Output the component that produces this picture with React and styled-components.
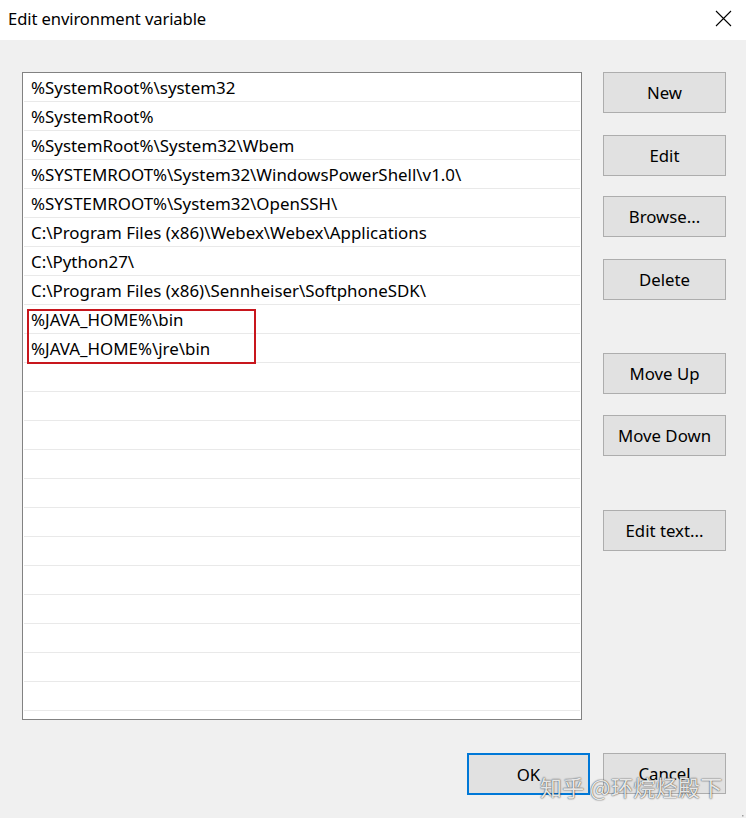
import React from 'react'
import styled, { createGlobalStyle } from 'styled-components'

const GlobalStyle = createGlobalStyle`
  html, body {
    margin: 0;
    padding: 0;
    background: #f0f0f0;
  }
  body {
    font-family: "Noto Sans", "Open Sans", sans-serif;
    color: #000;
  }
`

const Window = styled.div`
  width: 746px;
  height: 818px;
  display: flex;
  flex-direction: column;
  background: #f0f0f0;
  position: relative;
  overflow: hidden;
`

const TitleBar = styled.div`
  height: 40px;
  background: #fff;
  display: flex;
  align-items: center;
  justify-content: space-between;
  padding: 0 14px 0 8px;
  flex-shrink: 0;
`

const Title = styled.div`
  font-size: 16.6px;
  color: #000;
  letter-spacing: -0.1px;
  margin-top: -4px;
`

const CloseButton = styled.div`
  width: 18px;
  height: 18px;
  display: flex;
  align-items: center;
  justify-content: center;
  margin-top: -4px;
`

const Body = styled.div`
  flex: 1;
  display: flex;
  flex-direction: column;
  padding: 32px 20px 0 22px;
`

const Main = styled.div`
  display: flex;
  gap: 21px;
`

const ListBox = styled.div`
  position: relative;
  width: 558px;
  height: 646px;
  border: 1px solid #828282;
  background: #fff;
  overflow: hidden;
`

const Row = styled.div`
  height: 28px;
  margin: 0 1px;
  border-bottom: 1px solid #e9e9e9;
  display: flex;
  align-items: center;
  padding-left: 7px;
  font-size: 16.9px;
  white-space: nowrap;
  padding-top: 1px;
  box-sizing: border-box;
  height: 29px;
`

const Highlight = styled.div`
  position: absolute;
  left: 4px;
  top: 236px;
  width: 225px;
  height: 51px;
  border: 2px solid #c8161d;
`

const ButtonColumn = styled.div`
  display: flex;
  flex-direction: column;
`

const Button = styled.div`
  width: 121px;
  height: 39px;
  margin-top: ${p => p.$gap || 0}px;
  background: #e1e1e1;
  border: ${p => (p.$primary ? '2px solid #0078d7' : '1px solid #adadad')};
  box-sizing: content-box;
  display: flex;
  align-items: center;
  justify-content: center;
  font-size: 16.8px;
  ${p => p.$primary && 'width: 119px; height: 38px;'}
`

const Footer = styled.div`
  display: flex;
  justify-content: flex-end;
  gap: 13px;
  margin-top: 33px;
`

const Watermark = styled.div`
  position: absolute;
  left: 540px;
  top: 770px;
  font-family: "Noto Sans CJK SC", "Noto Sans", sans-serif;
  font-size: 22px;
  color: rgba(255, 255, 255, 0.88);
  text-shadow: 0 0 1px rgba(0, 0, 0, 0.7), 0 0 2px rgba(0, 0, 0, 0.45);
  letter-spacing: 0.3px;
  white-space: nowrap;
`

const Grip = styled.div`
  position: absolute;
  right: 2px;
  bottom: 2px;
  width: 10px;
  height: 10px;
`

const paths = [
  '%SystemRoot%\\system32',
  '%SystemRoot%',
  '%SystemRoot%\\System32\\Wbem',
  '%SYSTEMROOT%\\System32\\WindowsPowerShell\\v1.0\\',
  '%SYSTEMROOT%\\System32\\OpenSSH\\',
  'C:\\Program Files (x86)\\Webex\\Webex\\Applications',
  'C:\\Python27\\',
  'C:\\Program Files (x86)\\Sennheiser\\SoftphoneSDK\\',
  '%JAVA_HOME%\\bin',
  '%JAVA_HOME%\\jre\\bin',
]

const rows = [...paths, ...Array(13).fill('')]

const sideButtons = [
  { label: 'New', gap: 0 },
  { label: 'Edit', gap: 22 },
  { label: 'Browse...', gap: 20 },
  { label: 'Delete', gap: 22 },
  { label: 'Move Up', gap: 53 },
  { label: 'Move Down', gap: 21 },
  { label: 'Edit text...', gap: 54 },
]

export default function App() {
  return (
    <Window>
      <GlobalStyle />
      <TitleBar>
        <Title>Edit environment variable</Title>
        <CloseButton>
          <svg width="17" height="17" viewBox="0 0 17 17">
            <path d="M1 1 L16 16 M16 1 L1 16" stroke="#000" strokeWidth="1.1" fill="none" />
          </svg>
        </CloseButton>
      </TitleBar>
      <Body>
        <Main>
          <ListBox>
            {rows.map((r, i) => (
              <Row key={i}>{r}</Row>
            ))}
            <Highlight />
          </ListBox>
          <ButtonColumn>
            {sideButtons.map(b => (
              <Button key={b.label} $gap={b.gap}>{b.label}</Button>
            ))}
          </ButtonColumn>
        </Main>
        <Footer>
          <Button $primary>OK</Button>
          <Button>Cancel</Button>
        </Footer>
      </Body>
      <Watermark>知乎 @环烷烃殿下</Watermark>
      <Grip>
        <svg width="10" height="10" viewBox="0 0 10 10">
          {[[8, 2], [8, 5], [5, 5], [8, 8], [5, 8], [2, 8]].map(([x, y], i) => (
            <rect key={i} x={x} y={y} width="1.5" height="1.5" fill="#a0a0a0" />
          ))}
        </svg>
      </Grip>
    </Window>
  )
}
